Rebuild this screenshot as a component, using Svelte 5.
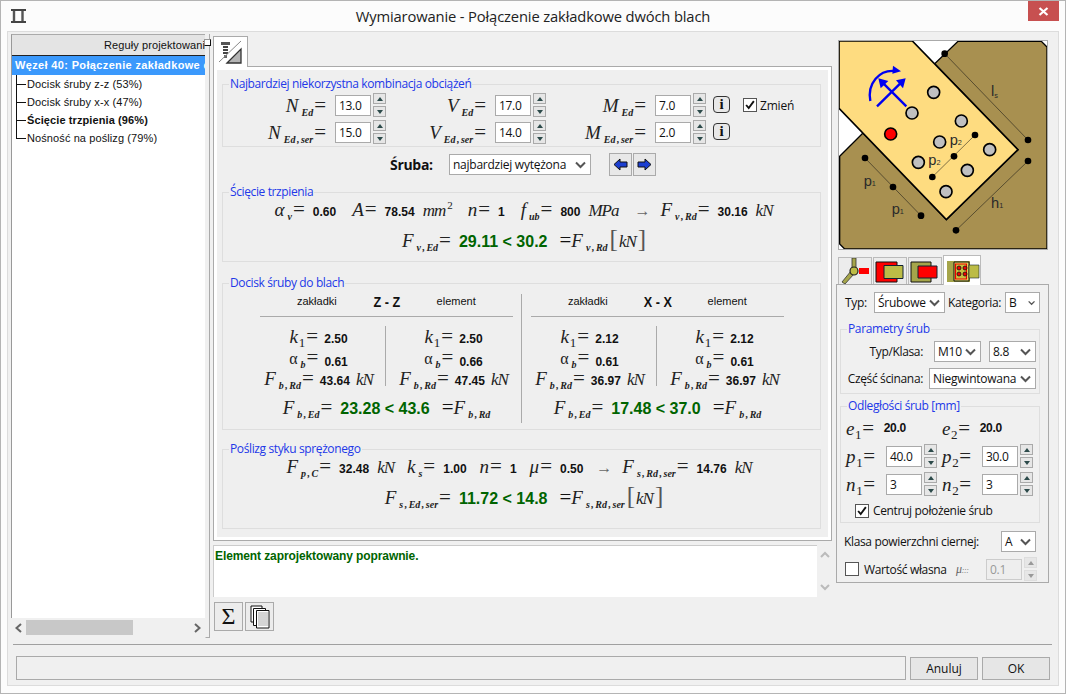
<script>
	const tree = [
		{ label: 'Docisk śruby z-z (53%)' },
		{ label: 'Docisk śruby x-x (47%)' },
		{ label: 'Ścięcie trzpienia (96%)', bold: true },
		{ label: 'Nośność na poślizg (79%)', last: true }
	];

	const loads = [
		[
			{ s: 'N', sub: 'Ed', v: '13.0' },
			{ s: 'V', sub: 'Ed', v: '17.0' },
			{ s: 'M', sub: 'Ed', v: '7.0' }
		],
		[
			{ s: 'N', sub: 'Ed , ser', v: '15.0' },
			{ s: 'V', sub: 'Ed , ser', v: '14.0' },
			{ s: 'M', sub: 'Ed , ser', v: '2.0' }
		]
	];

	const sides = [
		{
			axis: 'Z - Z',
			cols: [
				{ k: '2.50', a: '0.61', f: '43.64' },
				{ k: '2.50', a: '0.66', f: '47.45' }
			],
			ed: '23.28 < 43.6'
		},
		{
			axis: 'X - X',
			cols: [
				{ k: '2.12', a: '0.61', f: '36.97' },
				{ k: '2.12', a: '0.61', f: '36.97' }
			],
			ed: '17.48 < 37.0'
		}
	];

	// srodki srub w ukladzie rysunku
	const bolts = [
		[312, 188], [247, 250], [395, 274], [330, 337], [480, 360],
		[266, 398], [413, 422], [349, 486]
	];
	const dots = [
		[345, 72], [595, 331], [595, 394], [379, 602], [436, 316],
		[373, 380], [308, 442], [106, 385], [190, 472], [274, 558]
	];

	const isDigit = (s) => /^\d$/.test(s);
</script>

{#snippet sym(s, sub, plain = false)}
	<span class="sym"><i class:plain>{s}</i>{#if sub}<em class:num={isDigit(sub)}>{sub}</em>{/if}<span class="eq">=</span></span>
{/snippet}

{#snippet spin(disabled = false)}
	<span class="spin" class:off={disabled}>
		<span class="spin-btn"><span class="up"></span></span>
		<span class="spin-btn"><span class="down"></span></span>
	</span>
{/snippet}

{#snippet chevron()}
	<svg class="chev" width="11" height="8" viewBox="0 0 11 8"><path d="M1 1.500 5.500 6 10 1.500" fill="none" stroke="#555" stroke-width="2"/></svg>
{/snippet}

{#snippet combo(text, cls)}
	<span class="combo {cls}"><span>{text}</span>{@render chevron()}</span>
{/snippet}

{#snippet check()}
	<svg width="14" height="14" viewBox="0 0 14 14"><path d="M2.500 7 5.500 10.500 11.500 2.500" fill="none" stroke="#111" stroke-width="2.200"/></svg>
{/snippet}

<div class="window">
	<header class="titlebar">
		<svg class="app-icon" width="15" height="14" viewBox="0 0 15 14">
			<path d="M0 1h15M0 13h15" stroke="#444" stroke-width="2"/>
			<path d="M3 2v10M11.500 2v10" stroke="#555" stroke-width="2.400"/>
		</svg>
		<span class="title">Wymiarowanie - Połączenie zakładkowe dwóch blach</span>
		<span class="close">
			<svg width="11" height="9" viewBox="0 0 11 9"><path d="M1.500 1 9.500 8M9.500 1 1.500 8" stroke="#fff" stroke-width="2.200"/></svg>
		</span>
	</header>

	<div class="client">
		<div class="main">
			<aside class="tree-col">
				<div class="tree">
					<div class="tree-head">Reguły projektowania</div>
					<div class="tree-root">Węzeł 40: Połączenie zakładkowe dwóch blach</div>
					{#each tree as n}
						<div class="tree-node" class:bold={n.bold} class:last={n.last}>{n.label}</div>
					{/each}
				</div>
				<div class="hscroll">
					<svg width="9" height="10" viewBox="0 0 9 10"><path d="M7 1 2.500 5 7 9" fill="none" stroke="#666" stroke-width="2"/></svg>
					<span class="thumb"></span>
					<svg class="right" width="9" height="10" viewBox="0 0 9 10"><path d="M2 1 6.500 5 2 9" fill="none" stroke="#666" stroke-width="2"/></svg>
				</div>
			</aside>

			<div class="splitter"><span class="handle"></span></div>

			<section class="center">
				<div class="tab-row">
					<div class="tab">
						<svg width="26" height="26" viewBox="0 0 26 26">
							<path d="M3 2h9v3H3z" fill="#555"/>
							<path d="M5 6h5v2H5zM5 9h5v2H5zM5 12h5v2H5z" fill="#444"/>
							<path d="M6 15h3v3H6z" fill="#666"/>
							<path d="M1 22 23 1" stroke="#888" stroke-width="1"/>
							<path d="M9 23 23 9v14z" fill="#b4b4b4" stroke="#333" stroke-width="1.300"/>
						</svg>
					</div>
				</div>

				<div class="panel">
					<div class="panel-inner">
						<fieldset class="g1">
							<legend>Najbardziej niekorzystna kombinacja obciążeń</legend>
							<div class="loads">
								{#each loads as row, r}
									{#each row as c}
										<div class="load">
											{@render sym(c.s, c.sub)}
											<span class="input">{c.v}</span>
											{@render spin()}
										</div>
									{/each}
									<span class="info"><b>i</b></span>
									{#if r === 0}
										<label class="zmien"><span class="box">{@render check()}</span>Zmień</label>
									{:else}
										<span></span>
									{/if}
								{/each}
							</div>
						</fieldset>

						<div class="bolt-row">
							<b class="bolt-label">Śruba:</b>
							{@render combo('najbardziej wytężona', 'c-bolt')}
							<span class="arrows">
								<span class="arrow-btn">
									<svg width="15" height="13" viewBox="0 0 15 13"><path d="M1 6.500 7 1v3h7v5H7v3z" fill="#1c3fd0" stroke="#111"/></svg>
								</span>
								<span class="arrow-btn">
									<svg width="15" height="13" viewBox="0 0 15 13"><path d="M14 6.500 8 1v3H1v5h7v3z" fill="#1c3fd0" stroke="#111"/></svg>
								</span>
							</span>
						</div>

						<fieldset class="g2">
							<legend>Ścięcie trzpienia</legend>
							<div class="line l1">
								<span class="term">{@render sym('α', 'v')}<b>0.60</b></span>
								<span class="term">{@render sym('A')}<b>78.54</b><i class="unit">mm<sup>2</sup></i></span>
								<span class="term">{@render sym('n')}<b>1</b></span>
								<span class="term">{@render sym('f', 'ub')}<b>800</b><i class="unit">MPa</i></span>
								<span class="to">→</span>
								<span class="term">{@render sym('F', 'v , Rd')}<b>30.16</b><i class="unit">kN</i></span>
							</div>
							<div class="line l2">
								{@render sym('F', 'v , Ed')}
								<b class="ok">29.11 &lt; 30.2</b>
								<span class="rhs"><span class="eq">=</span><span class="sym"><i>F</i><em>v , Rd</em></span><span class="br">[</span><i class="unit">kN</i><span class="br">]</span></span>
							</div>
						</fieldset>

						<fieldset class="g3">
							<legend>Docisk śruby do blach</legend>
							<div class="bearing">
								{#each sides as side, i}
									<div class="side" class:second={i === 1}>
										<div class="side-head">
											<span>zakładki</span>
											<b>{side.axis}</b>
											<span>element</span>
										</div>
										<div class="side-cols">
											{#each side.cols as c}
												<div class="side-col">
													<div class="row">{@render sym('k', '1')}<b>{c.k}</b></div>
													<div class="row">{@render sym('α', 'b', true)}<b class="low">{c.a}</b></div>
													<div class="row">{@render sym('F', 'b , Rd')}<b>{c.f}</b><i class="unit">kN</i></div>
												</div>
											{/each}
										</div>
										<div class="line side-res">
											{@render sym('F', 'b , Ed')}
											<b class="ok">{side.ed}</b>
											<span class="rhs"><span class="eq">=</span><span class="sym"><i>F</i><em>b , Rd</em></span></span>
										</div>
									</div>
								{/each}
							</div>
						</fieldset>

						<fieldset class="g4">
							<legend>Poślizg styku sprężonego</legend>
							<div class="line l1">
								<span class="term">{@render sym('F', 'p , C')}<b>32.48</b><i class="unit">kN</i></span>
								<span class="term">{@render sym('k', 's')}<b>1.00</b></span>
								<span class="term">{@render sym('n')}<b>1</b></span>
								<span class="term">{@render sym('μ')}<b>0.50</b></span>
								<span class="to">→</span>
								<span class="term">{@render sym('F', 's , Rd , ser')}<b>14.76</b><i class="unit">kN</i></span>
							</div>
							<div class="line l2">
								{@render sym('F', 's , Ed , ser')}
								<b class="ok">11.72 &lt; 14.8</b>
								<span class="rhs"><span class="eq">=</span><span class="sym"><i>F</i><em>s , Rd , ser</em></span><span class="br">[</span><i class="unit">kN</i><span class="br">]</span></span>
							</div>
						</fieldset>
					</div>
				</div>

				<div class="message-row">
					<div class="message">Element zaprojektowany poprawnie.</div>
					<div class="vscroll">
						<svg width="10" height="8" viewBox="0 0 10 8"><path d="M1 6 5 2l4 4" fill="none" stroke="#bbb" stroke-width="2"/></svg>
						<svg width="10" height="8" viewBox="0 0 10 8"><path d="M1 2 5 6l4-4" fill="none" stroke="#bbb" stroke-width="2"/></svg>
					</div>
				</div>

				<div class="tools">
					<span class="tool sigma">Σ</span>
					<span class="tool">
						<svg width="20" height="24" viewBox="0 0 20 24">
							<path d="M1 1h11v16H1z" fill="#fff" stroke="#111"/>
							<path d="M3.500 3.500h12v17h-12z" fill="#fff" stroke="#111"/>
							<path d="M6.500 5.500h12.500v17.500h-12.500z" fill="#fff" stroke="#111"/>
							<path d="M8 8h10M8 10h10M8 12h10M8 14h10M8 16h10M8 18h10M8 20h10" stroke="#aaa"/>
						</svg>
					</span>
				</div>
			</section>

			<aside class="side-panel">
				<div class="sketch">
					<svg width="208" height="208" viewBox="28 34 624 624">
						<rect x="25" y="32" width="630" height="630" fill="#fff"/>
						<path d="M385 35H635L652 52V658H45L30 643V380L100 310 350 570 565 360 315 102Z" fill="#a89050" stroke="#000" stroke-width="4"/>
						<path d="M28 34H248L565 360 350 570 28 236Z" fill="#fedc80" stroke="#000" stroke-width="5"/>
						<path d="M345 72 595 331M595 394 379 602M436 316 308 442M106 385 274 558" stroke="#111" stroke-width="1.600" fill="none"/>
						{#each dots as d}
							<circle cx={d[0]} cy={d[1]} r="10" fill="#000"/>
						{/each}
						{#each bolts as b}
							<circle cx={b[0]} cy={b[1]} r="18" fill="#c0c0c0" stroke="#000" stroke-width="5"/>
						{/each}
						<circle cx="183" cy="313" r="18" fill="#f00" stroke="#000" stroke-width="5"/>
						<g stroke="#0000f0" stroke-width="7" fill="none">
							<path d="M122 214C112 160 150 120 195 124"/>
							<path d="M142 230 215 158M230 230 158 158"/>
						</g>
						<path d="M190 108 214 125 188 132ZM228 146 220 176 199 152ZM146 146 176 154 153 176Z" fill="#0000f0"/>
						<g class="dim">
							<text x="484" y="200">l<tspan class="dim-sub" dy="4">s</tspan></text>
							<text x="484" y="536">h<tspan class="dim-sub">1</tspan></text>
							<text x="360" y="346">p<tspan class="dim-sub">2</tspan></text>
							<text x="296" y="406">p<tspan class="dim-sub">2</tspan></text>
							<text x="102" y="470">p<tspan class="dim-sub">1</tspan></text>
							<text x="186" y="553">p<tspan class="dim-sub">1</tspan></text>
						</g>
					</svg>
				</div>

				<div class="conn-tabs">
					<span class="conn">
						<svg width="32" height="26" viewBox="0 0 32 26">
							<path d="M13 0h4v10h-4z" fill="#a5a54a" stroke="#333" stroke-width=".8"/>
							<path d="M3 24 12 13l3 3-9 10z" fill="#a5a54a" stroke="#333" stroke-width=".8"/>
							<path d="M20 10h10v6H20z" fill="#f00"/>
							<circle cx="15" cy="13" r="4" fill="#bcbc46" stroke="#222" stroke-width="1.200"/>
						</svg>
					</span>
					<span class="conn">
						<svg width="32" height="26" viewBox="0 0 32 26">
							<path d="M2 4h21v20H2z" fill="#f00" stroke="#111"/>
							<path d="M10 7.500h19v13H10z" fill="#bcbc46" stroke="#123"/>
						</svg>
					</span>
					<span class="conn">
						<svg width="32" height="26" viewBox="0 0 32 26">
							<path d="M2 4h20v20H2z" fill="#a5a54a" stroke="#111"/>
							<path d="M9 8h19v12H9z" fill="#f00" stroke="#123"/>
						</svg>
					</span>
					<span class="conn active">
						<svg width="36" height="29" viewBox="0 0 36 29">
							<path d="M3 5h23v21H3z" fill="#a5a54a"/>
							<path d="M10 6h15v19H10z" fill="#e8e060" stroke="#111"/>
							<path d="M11.500 8h11v15h-11z" fill="#c8c040" stroke="#e00" stroke-width="1.200"/>
							<path d="M25 9h10v13H25z" fill="#bcbc46" stroke="#123" stroke-width=".6"/>
							<g fill="#e00" stroke="#111" stroke-width=".8">
								<circle cx="15" cy="12" r="2"/><circle cx="21" cy="12" r="2"/>
								<circle cx="15" cy="18" r="2"/><circle cx="21" cy="18" r="2"/>
							</g>
						</svg>
					</span>
				</div>

				<div class="props">
					<div class="prop-top">
						<span>Typ:</span>
						{@render combo('Śrubowe', 'c-typ')}
						<span>Kategoria:</span>
						{@render combo('B', 'c-kat')}
					</div>

					<fieldset class="p1">
						<legend>Parametry śrub</legend>
						<div class="param">
							<span class="param-label">Typ/Klasa:</span>
							{@render combo('M10', 'c-m10')}
							{@render combo('8.8', 'c-88')}
						</div>
						<div class="param">
							<span class="param-label">Część ścinana:</span>
							{@render combo('Niegwintowana', 'c-gwint')}
						</div>
					</fieldset>

					<fieldset class="p2">
						<legend>Odległości śrub [mm]</legend>
						<div class="dist">
							<div class="dist-cell">{@render sym('e', '1')}<b>20.0</b></div>
							<div class="dist-cell">{@render sym('e', '2')}<b>20.0</b></div>
							<div class="dist-cell">{@render sym('p', '1')}<span class="input">40.0</span>{@render spin()}</div>
							<div class="dist-cell">{@render sym('p', '2')}<span class="input">30.0</span>{@render spin()}</div>
							<div class="dist-cell">{@render sym('n', '1')}<span class="input">3</span>{@render spin()}</div>
							<div class="dist-cell">{@render sym('n', '2')}<span class="input">3</span>{@render spin()}</div>
						</div>
						<label class="center-bolts"><span class="box">{@render check()}</span>Centruj położenie śrub</label>
					</fieldset>

					<div class="friction">
						<span>Klasa powierzchni ciernej:</span>
						{@render combo('A', 'c-a')}
					</div>
					<div class="own">
						<span class="box big"></span>
						<span class="own-label">Wartość własna</span>
						<span class="mu">μ<small>:::</small></span>
						<span class="input off">0.1</span>
						{@render spin(true)}
					</div>
				</div>
			</aside>
		</div>

		<div class="sep"></div>

		<footer class="footer">
			<div class="status"></div>
			<span class="btn">Anuluj</span>
			<span class="btn">OK</span>
		</footer>
	</div>
</div>

<style>
	:global(body) {
		margin: 0;
		background: #fff;
	}

	.window {
		width: 1066px;
		height: 694px;
		box-sizing: border-box;
		border: 1px solid #b4b4b4;
		background: #fcfcfc;
		display: flex;
		flex-direction: column;
		font: 11px "Liberation Sans", Arial, sans-serif;
		color: #111;
		overflow: hidden;
	}

	/* pasek tytulu */
	.titlebar {
		height: 30px;
		flex: none;
		display: flex;
		align-items: flex-start;
		position: relative;
	}
	.app-icon {
		margin: 8px 0 0 10px;
	}
	.title {
		position: absolute;
		left: 0;
		right: 0;
		top: 5px;
		text-align: center;
		font: 14.750px "Open Sans", sans-serif;
		letter-spacing: -0.150px;
		color: #222;
	}
	.close {
		margin: 0 6px 0 auto;
		width: 31px;
		height: 20px;
		background: #c75050;
		display: flex;
		align-items: center;
		justify-content: center;
		z-index: 1;
	}

	.client {
		flex: 1;
		margin: 0 6px 7px;
		background: #f0f0f0;
		border: 1px solid #dcdcdc;
		display: flex;
		flex-direction: column;
		min-height: 0;
	}

	.main {
		height: 612px;
		flex: none;
		display: flex;
		padding: 2px 0 0 3px;
		box-sizing: border-box;
	}

	/* drzewo */
	.tree-col {
		width: 194px;
		flex: none;
	}
	.tree {
		height: 584px;
		box-sizing: border-box;
		background: #fff;
		border-left: 1px solid #999;
		border-top: 1px solid #aaa;
		overflow: hidden;
	}
	.tree-head {
		height: 20px;
		line-height: 20px;
		background: #e4e4e4;
		border-bottom: 1px solid #222;
		white-space: nowrap;
		padding-left: 92px;
		overflow: hidden;
		letter-spacing: 0.100px;
	}
	.tree-root {
		height: 19px;
		line-height: 19px;
		background: #3b99fc;
		color: #fff;
		font-weight: 700;
		white-space: nowrap;
		padding-left: 3px;
		letter-spacing: 0.350px;
		overflow: hidden;
	}
	.tree-node {
		height: 18px;
		line-height: 18px;
		padding-left: 15px;
		white-space: nowrap;
		letter-spacing: 0.100px;
		background:
			linear-gradient(#111, #111) 4px 0 / 1px 100% no-repeat,
			linear-gradient(#111, #111) 4px 9px / 10px 1px no-repeat;
	}
	.tree-node.last {
		background:
			linear-gradient(#111, #111) 4px 0 / 1px 10px no-repeat,
			linear-gradient(#111, #111) 4px 9px / 10px 1px no-repeat;
	}
	.tree-node.bold {
		font-weight: 700;
	}
	.hscroll {
		height: 15px;
		margin-top: 2px;
		display: flex;
		align-items: center;
		padding-left: 3px;
	}
	.hscroll .thumb {
		width: 107px;
		height: 15px;
		margin-left: 3px;
		background: #c8c8c8;
	}
	.hscroll .right {
		margin-left: 60px;
	}

	.splitter {
		width: 3px;
		margin: 0 3px 0 0;
		height: 603px;
		flex: none;
		border-right: 1px solid #aaa;
		border-bottom: 1px solid #aaa;
		border-left: 1px solid transparent;
		position: relative;
	}
	.handle {
		position: absolute;
		left: -2px;
		top: 5px;
		width: 7px;
		height: 7px;
		background: #fff;
		border: 1px solid #999;
		border-bottom-color: #111;
		border-right-color: #111;
		box-sizing: border-box;
	}

	/* srodek */
	.center {
		width: 619px;
		flex: none;
		display: flex;
		flex-direction: column;
	}
	.tab-row {
		height: 32px;
		flex: none;
		display: flex;
		align-items: flex-end;
	}
	.tab {
		width: 35px;
		height: 31px;
		background: #fff;
		border: 1px solid #aaa;
		border-bottom: none;
		position: relative;
		z-index: 1;
		margin-bottom: -1px;
		padding: 3px 0 0 4px;
		box-sizing: border-box;
	}
	.panel {
		height: 475px;
		flex: none;
		box-sizing: border-box;
		border: 1px solid #aaa;
		background: #fff;
		padding: 3px;
	}
	.panel-inner {
		height: 100%;
		background: #efefef;
		padding: 7px 7px 0 5px;
		box-sizing: border-box;
		display: flex;
		flex-direction: column;
	}

	fieldset {
		margin: 0;
		padding: 0;
		min-width: 0;
		border: 1px solid #dedede;
		box-sizing: border-box;
		flex: none;
	}
	legend {
		margin-left: 6px;
		padding: 0 1px;
		font: 12px/14px "Open Sans", sans-serif;
		letter-spacing: -0.380px;
		color: #2238e8;
	}

	.g1 { height: 70px; }
	.g2 { height: 77px; }
	.g3 { height: 154px; margin-top: 14px; }
	.g4 { height: 87px; margin-top: 12px; }

	.loads {
		display: grid;
		grid-template-columns: 163px 160px 160px 24px 1fr;
		row-gap: 3px;
		padding-top: 2px;
	}
	.load {
		display: flex;
		justify-content: flex-end;
		align-items: center;
		height: 24px;
	}
	.load :global(.sym) {
		margin-right: 9px;
	}
	.info {
		margin: 3px 0 0 7px;
		width: 17px;
		height: 17px;
		box-sizing: border-box;
		border: 1.500px solid #333;
		border-radius: 4px;
		background: #e8e8e8;
		display: flex;
		align-items: center;
		justify-content: center;
		font: 700 15px "Liberation Serif", serif;
	}
	.zmien {
		display: flex;
		align-items: center;
		gap: 3px;
		margin-left: 13px;
		font: 12px "Open Sans", sans-serif;
		letter-spacing: -0.200px;
	}

	.box {
		width: 12px;
		height: 12px;
		border: 1px solid #555;
		background: #fff;
		display: inline-flex;
		align-items: center;
		justify-content: center;
		flex: none;
	}
	.box.big {
		width: 12px;
		height: 12px;
	}
	.box svg {
		width: 12px;
		height: 12px;
	}

	.input {
		width: 36px;
		height: 21px;
		box-sizing: border-box;
		border: 1px solid #aaa;
		background: #fff;
		line-height: 19px;
		padding-left: 3px;
		font: 12px/19px "Open Sans", sans-serif;
		letter-spacing: -0.300px;
		flex: none;
	}
	.input.off {
		background: #eee;
		border-color: #ccc;
		color: #999;
	}
	.spin {
		display: inline-flex;
		flex-direction: column;
		gap: 2px;
		margin-left: 2px;
		flex: none;
	}
	.spin-btn {
		width: 13px;
		height: 11px;
		box-sizing: border-box;
		border: 1px solid #aaa;
		background: #e6e6e6;
		display: flex;
		align-items: center;
		justify-content: center;
	}
	.up,
	.down {
		width: 0;
		height: 0;
		border-left: 3.500px solid transparent;
		border-right: 3.500px solid transparent;
	}
	.up { border-bottom: 4px solid #2c4a4a; }
	.down { border-top: 4px solid #2c4a4a; }
	.spin.off .spin-btn {
		border-color: #ddd;
	}
	.spin.off .up { border-bottom-color: #999; }
	.spin.off .down { border-top-color: #999; }

	.bolt-row {
		height: 35px;
		padding-bottom: 3px;
		flex: none;
		display: flex;
		align-items: center;
		padding-left: 168px;
	}
	.bolt-label {
		font: 700 14px "Open Sans", sans-serif;
		letter-spacing: -0.300px;
		width: 59px;
	}
	.arrows {
		display: flex;
		gap: 1px;
		margin-left: 18px;
	}
	.arrow-btn {
		width: 23px;
		height: 23px;
		box-sizing: border-box;
		border: 1px solid #aaa;
		background: #e8e8e8;
		display: flex;
		align-items: center;
		justify-content: center;
	}

	.combo {
		height: 21px;
		box-sizing: border-box;
		border: 1px solid #aaa;
		background: #fff;
		display: inline-flex;
		align-items: center;
		justify-content: space-between;
		padding: 0 4px 0 3px;
		font: 12px "Open Sans", sans-serif;
		letter-spacing: -0.250px;
		flex: none;
		white-space: nowrap;
	}
	.c-bolt { width: 142px; }
	.c-typ { width: 71px; }
	.c-kat { width: 35px; }
	.c-m10 { width: 47px; }
	.c-88 { width: 47px; margin-left: 8px; }
	.c-gwint { width: 107px; }
	.c-a { width: 35px; }

	/* wzory */
	.sym {
		display: inline-flex;
		align-items: baseline;
		font: 19px "Liberation Serif", serif;
		color: #222;
		white-space: nowrap;
	}
	.sym i {
		font-size: 19px;
	}
	.sym i.plain {
		font-size: 16px;
		font-style: normal;
	}
	.sym em {
		font: italic 700 10px "Liberation Serif", serif;
		margin-left: 3px;
		word-spacing: -1px;
		transform: translateY(4px);
	}
	.sym em.num {
		font: 13px "Liberation Serif", serif;
		margin-left: 1px;
	}
	.eq {
		font: 21px "Liberation Serif", serif;
		margin-left: 1px;
	}
	.line {
		display: flex;
		justify-content: center;
		align-items: baseline;
	}
	.line b,
	.row b,
	.dist-cell b {
		font: 700 12px "Liberation Sans", sans-serif;
	}
	.term {
		display: inline-flex;
		align-items: baseline;
		gap: 8px;
		margin-right: 16px;
	}
	.g4 .term {
		margin-right: 13px;
	}
	.unit {
		font: italic 17px "Liberation Serif", serif;
		color: #222;
		letter-spacing: -1px;
	}
	.unit sup {
		font-size: 11px;
		line-height: 0;
		font-style: normal;
		margin-left: 2px;
	}
	.to {
		font: 16px "Liberation Sans", sans-serif;
		color: #666;
		margin-right: 10px;
	}
	.line .ok {
		font: 700 16px "Liberation Sans", sans-serif;
		color: #006400;
		margin: 0 11px 0 8px;
	}
	.rhs {
		display: inline-flex;
		align-items: baseline;
	}
	.br {
		font: 25px "Liberation Serif", serif;
		color: #555;
		margin: 0 1px 0 2px;
	}
	.g2 .l1,
	.g4 .l1 {
		margin-top: -2px;
		height: 26px;
	}
	.g2 .l1 {
		padding-left: 20px;
	}
	.g4 .l1 {
		padding-left: 8px;
	}
	.g2 .l2,
	.g4 .l2 {
		margin-top: 2px;
		padding-left: 6px;
	}

	.bearing {
		display: grid;
		grid-template-columns: 299px 1fr;
		height: 129px;
		margin-top: 4px;
	}
	.side {
		padding: 0 8px 0 37px;
		border-right: 1px solid #aaa;
		box-sizing: border-box;
	}
	.side.second {
		padding: 0 0 0 9px;
		border-right: none;
		width: 262px;
	}
	.side-head {
		display: grid;
		grid-template-columns: 1fr 1fr 1fr;
		text-align: center;
		height: 22px;
		padding: 0 22px;
		line-height: 14px;
		border-bottom: 1px solid #aaa;
		font-size: 11px;
	}
	.side-head b {
		font: 700 14px "Liberation Sans", sans-serif;
		transform: scaleX(0.9);
	}
	.side-cols {
		display: grid;
		grid-template-columns: 126px 1fr;
		margin: 9px 0 0;
	}
	.side-col {
		height: 60px;
		padding-left: 8px;
	}
	.side-col:first-child {
		border-right: 1px solid #aaa;
		padding: 0 8px 0 0;
	}
	.row {
		height: 20px;
		margin-bottom: 1px;
		display: flex;
		justify-content: center;
		align-items: baseline;
		gap: 6px;
		white-space: nowrap;
		line-height: 1;
	}
	.row :global(.sym),
	.row :global(.eq),
	.row .unit {
		line-height: 1;
	}
	.row .low {
		position: relative;
		top: 2px;
	}
	.side-res {
		margin-top: 9px;
	}

	/* komunikat */
	.message-row {
		display: flex;
		margin-top: 4px;
		height: 52px;
		flex: none;
	}
	.message {
		width: 604px;
		background: #fff;
		border-top: 1px solid #ccc;
		border-left: 1px solid #ccc;
		box-sizing: border-box;
		padding: 3px 0 0 1px;
		font-weight: 700;
		font-size: 12px;
		color: #006400;
		letter-spacing: -0.100px;
	}
	.vscroll {
		width: 15px;
		display: flex;
		flex-direction: column;
		align-items: center;
		justify-content: space-between;
		padding: 6px 0;
		box-sizing: border-box;
	}
	.tools {
		display: flex;
		gap: 2px;
		margin: 5px 0 0 1px;
	}
	.tool {
		width: 29px;
		height: 29px;
		box-sizing: border-box;
		border: 1px solid #aaa;
		background: #ececec;
		display: flex;
		align-items: center;
		justify-content: center;
	}
	.sigma {
		font: 24px "Liberation Serif", serif;
	}

	/* prawy panel */
	.side-panel {
		width: 214px;
		flex: none;
		margin-left: 4px;
	}
	.sketch {
		width: 210px;
		height: 210px;
		box-sizing: border-box;
		margin: 6px 0 0 2px;
		border: 1px solid #aaa;
		overflow: hidden;
	}
	.sketch svg {
		display: block;
	}
	.dim text {
		font: 44px "Liberation Sans", sans-serif;
		fill: #2a2a2a;
	}
	.dim .dim-sub {
		font-size: 22px;
	}
	.conn-tabs {
		display: flex;
		align-items: flex-end;
		gap: 1px;
		margin: 5px 0 0 2px;
		height: 29px;
	}
	.conn {
		width: 34px;
		height: 27px;
		box-sizing: border-box;
		border: 1px solid #bbb;
		border-bottom: none;
		background: #ececec;
		overflow: hidden;
		display: flex;
		align-items: center;
		justify-content: center;
	}
	.conn.active {
		width: 38px;
		height: 30px;
		background: #fff;
		position: relative;
		margin-bottom: -1px;
		z-index: 1;
	}
	.props {
		width: 213px;
		height: 299px;
		box-sizing: border-box;
		border: 1px solid #aaa;
		padding: 7px 0 0 3px;
		font: 12px "Open Sans", sans-serif;
		letter-spacing: -0.350px;
	}
	.prop-top {
		display: flex;
		align-items: center;
		margin: 0 0 9px 5px;
	}
	.prop-top span:first-child {
		width: 29px;
	}
	.prop-top :global(.c-typ) {
		margin-right: 3px;
	}
	.prop-top :global(.c-kat) {
		margin-left: 4px;
	}
	.props fieldset {
		width: 200px;
	}
	.p1 { height: 72px; padding-top: 5px; }
	.p2 { height: 124px; margin-top: 5px; }
	.param {
		display: flex;
		align-items: center;
		height: 21px;
		margin: 0 0 6px;
	}
	.param-label {
		width: 82px;
		text-align: right;
		margin-right: 6px;
	}
	.param:first-of-type .param-label {
		margin-right: 11px;
	}
	.dist {
		display: grid;
		grid-template-columns: 96px 96px;
		padding: 1px 0 0 5px;
	}
	.dist-cell {
		height: 28px;
		display: flex;
		align-items: center;
		gap: 0;
	}
	.dist-cell:nth-child(-n + 2) {
		gap: 10px;
	}
	.dist-cell:nth-child(-n + 2) b {
		font-size: 12px;
	}
	.dist-cell :global(.sym) {
		width: 40px;
	}
	.dist-cell:nth-child(-n + 2) :global(.sym) {
		width: auto;
	}
	.center-bolts {
		display: flex;
		align-items: center;
		gap: 4px;
		margin: 4px 0 0 14px;
	}
	.friction {
		display: flex;
		align-items: center;
		justify-content: space-between;
		width: 192px;
		margin: 8px 0 0 4px;
	}
	.own {
		display: flex;
		align-items: center;
		margin: 5px 0 0 5px;
	}
	.own-label {
		margin-left: 5px;
		width: 88px;
	}
	.mu {
		font: italic 12px "Liberation Serif", serif;
		width: 34px;
		padding-left: 4px;
		box-sizing: border-box;
		color: #666;
	}
	.mu small {
		font-size: 8px;
	}

	/* dol */
	.sep {
		height: 1px;
		background: #a0a0a0;
		margin: 0 6px 0 5px;
		flex: none;
	}
	.footer {
		display: flex;
		margin: 11px 0 0 8px;
		gap: 4px;
		align-items: flex-start;
	}
	.status {
		width: 890px;
		height: 24px;
		box-sizing: border-box;
		border: 1px solid #aaa;
		margin-right: 0;
	}
	.btn {
		width: 68px;
		height: 23px;
		box-sizing: border-box;
		border: 1px solid #aaa;
		background: #e6e6e6;
		text-align: center;
		font: 12px/21px "Open Sans", sans-serif;
		margin-top: 1px;
	}
</style>
